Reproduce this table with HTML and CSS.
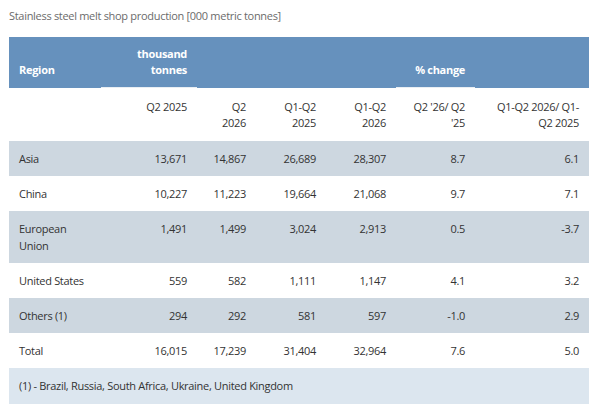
FILE: index.html
```html
<!DOCTYPE html>
<html lang="en">
<head>
<meta charset="utf-8">
<title>Stainless steel melt shop production</title>
<link rel="stylesheet" href="styles.css">
</head>
<body>
<div class="page">
  <p class="caption">Stainless steel melt shop production [000 metric tonnes]</p>
  <table class="data">
    <colgroup>
      <col class="c-region">
      <col class="c-q2a">
      <col class="c-q2b">
      <col class="c-h1a">
      <col class="c-h1b">
      <col class="c-pq">
      <col class="c-ph">
    </colgroup>
    <thead>
      <tr class="head">
        <th class="left">Region</th>
        <th class="mark">thousand tonnes</th>
        <th></th>
        <th></th>
        <th></th>
        <th class="mark">% change</th>
        <th></th>
      </tr>
      <tr class="sub">
        <td></td>
        <td>Q2 2025</td>
        <td>Q2 2026</td>
        <td>Q1-Q2 2025</td>
        <td>Q1-Q2 2026</td>
        <td>Q2 '26/ Q2 '25</td>
        <td>Q1-Q2 2026/ Q1-Q2 2025</td>
      </tr>
    </thead>
    <tbody>
      <tr class="shade">
        <td class="left">Asia</td><td>13,671</td><td>14,867</td><td>26,689</td><td>28,307</td><td>8.7</td><td>6.1</td>
      </tr>
      <tr>
        <td class="left">China</td><td>10,227</td><td>11,223</td><td>19,664</td><td>21,068</td><td>9.7</td><td>7.1</td>
      </tr>
      <tr class="shade">
        <td class="left">European Union</td><td>1,491</td><td>1,499</td><td>3,024</td><td>2,913</td><td>0.5</td><td>-3.7</td>
      </tr>
      <tr>
        <td class="left">United States</td><td>559</td><td>582</td><td>1,111</td><td>1,147</td><td>4.1</td><td>3.2</td>
      </tr>
      <tr class="shade">
        <td class="left">Others (1)</td><td>294</td><td>292</td><td>581</td><td>597</td><td>-1.0</td><td>2.9</td>
      </tr>
      <tr>
        <td class="left">Total</td><td>16,015</td><td>17,239</td><td>31,404</td><td>32,964</td><td>7.6</td><td>5.0</td>
      </tr>
      <tr class="note">
        <td class="left" colspan="7">(1) - Brazil, Russia, South Africa, Ukraine, United Kingdom</td>
      </tr>
    </tbody>
  </table>
</div>
</body>
</html>
```

FILE: styles.css
```css
html, body {
  margin: 0;
  padding: 0;
  background: #ffffff;
}

body {
  font-family: "Open Sans", "DejaVu Sans", sans-serif;
  font-size: 11px;
  letter-spacing: -0.3px;
  color: #333333;
}

.page {
  padding: 8px 11px 0 9px;
}

.caption {
  margin: 0 0 13px 0;
  line-height: 16px;
  color: #6b6b6b;
  font-weight: 400;
}

.data {
  width: 580px;
  table-layout: fixed;
  border-collapse: collapse;
  border-spacing: 0;
}

.c-region { width: 92px; }
.c-q2a { width: 96px; }
.c-q2b { width: 59px; }
.c-h1a { width: 70px; }
.c-h1b { width: 70px; }
.c-pq { width: 79px; }
.c-ph { width: 114px; }

.data th,
.data td {
  padding: 9px 10px 9px;
  line-height: 17px;
  text-align: right;
  vertical-align: top;
}

.data .left {
  text-align: left;
}

.head th {
  background: #6691bd;
  color: #ffffff;
  font-weight: 700;
  vertical-align: bottom;
  line-height: 16px;
  padding: 9px 10px 9px;
  border-bottom: 1px solid #6691bd;
}

.head th.mark {
  border-bottom: 1px solid #e9eef3;
}

.sub td {
  line-height: 16px;
  padding: 11px 10px 10px;
}

.shade td {
  background: #cdd7e0;
}

.note td {
  background: #dce6ef;
  padding: 9px 10px 10px;
}
```
